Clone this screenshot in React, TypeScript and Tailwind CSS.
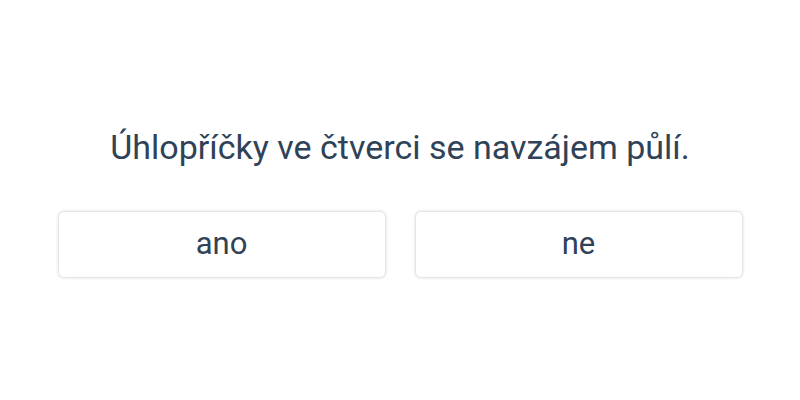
const App = () => {
  const answers = ["ano", "ne"];

  return (
    <div
      className="w-[800px] h-[400px] bg-white flex flex-col items-center pt-[123px] text-[#2f4257]"
      style={{ fontFamily: "Roboto, 'Noto Sans', sans-serif" }}
    >
      <h2 className="text-[34px] leading-[48px] font-normal">
        Úhlopříčky ve čtverci se navzájem půlí.
      </h2>
      <div className="mt-[40px] flex gap-[29px]">
        {answers.map((answer) => (
          <button
            key={answer}
            className="w-[328px] h-[67px] rounded-md border border-[#e6e6e6] bg-white shadow-[0_0_3px_rgba(0,0,0,0.14)] text-[31px]"
          >
            {answer}
          </button>
        ))}
      </div>
    </div>
  );
};

export default App;
